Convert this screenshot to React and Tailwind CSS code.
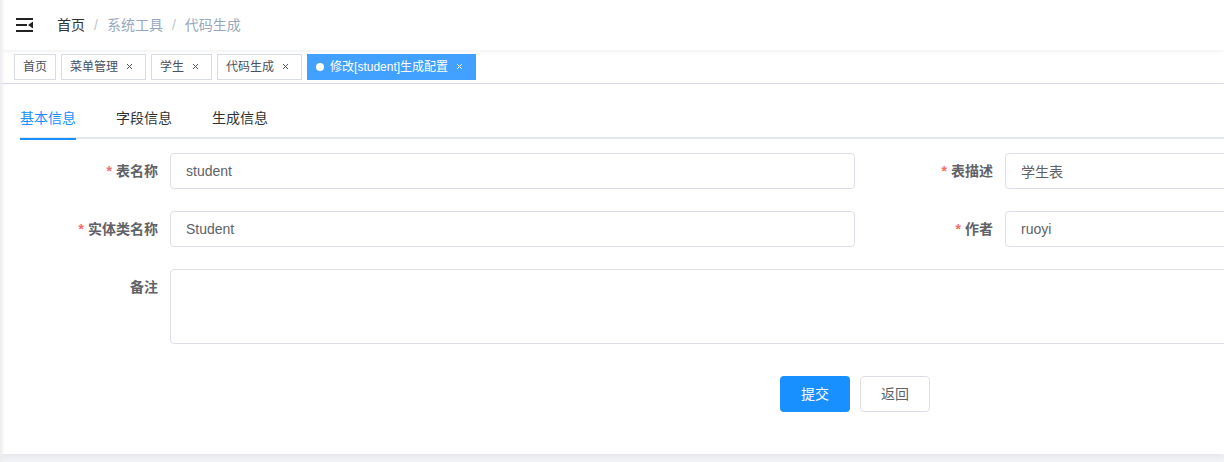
import React, { useState } from 'react';

const FONT = { fontFamily: '"Liberation Sans", "Noto Sans CJK SC", sans-serif' };

const TAGS = [
  { title: '首页', closable: false },
  { title: '菜单管理', closable: true },
  { title: '学生', closable: true },
  { title: '代码生成', closable: true },
  { title: '修改[student]生成配置', closable: true, active: true },
];

function Hamburger() {
  return (
    <svg width="18" height="16" viewBox="0 0 18 16" className="block">
      <rect x="0" y="1" width="17" height="2" fill="#222" />
      <rect x="0" y="7" width="11" height="2" fill="#222" />
      <rect x="0" y="13" width="17" height="2" fill="#222" />
      <polygon points="12,8 17,4.5 17,11.5" fill="#222" />
    </svg>
  );
}

function CloseX({ light }) {
  return (
    <span className="ml-[3px] w-4 h-4 flex items-center justify-center">
      <svg width="7" height="7" viewBox="0 0 7 7">
        <path d="M1 1L6 6M6 1L1 6" stroke={light ? '#fff' : '#555'} strokeWidth="1" />
      </svg>
    </span>
  );
}

function Label({ text, required }) {
  return (
    <label className="w-[150px] shrink-0 pr-3 text-right text-sm font-bold text-[#606266] leading-9">
      {required && <span className="text-[#f56c6c] mr-1">*</span>}
      {text}
    </label>
  );
}

function Field({ label, value, required }) {
  return (
    <div className="flex mb-[22px]">
      <Label text={label} required={required} />
      <input
        defaultValue={value}
        className="flex-1 h-9 px-[15px] border border-[#dcdfe6] rounded text-sm text-[#606266] outline-none bg-white"
        style={FONT}
      />
    </div>
  );
}

export default function App() {
  const [tab, setTab] = useState(0);
  const tabs = ['基本信息', '字段信息', '生成信息'];

  return (
    <div className="relative w-[1224px] h-[462px] overflow-hidden bg-[#f0f2f5]" style={FONT}>
      {/* sidebar shadow */}
      <div className="absolute left-0 top-0 bottom-0 w-[5px] z-10 bg-gradient-to-r from-[#ececec] to-transparent" />

      {/* Navbar */}
      <div className="h-[50px] bg-white flex items-center shadow-[0_1px_4px_rgba(0,21,41,0.08)] relative z-[1]">
        <div className="pl-4 pr-[23px]">
          <Hamburger />
        </div>
        <div className="flex items-center text-sm">
          <span className="text-[#303133]">首页</span>
          <span className="mx-[9px] text-[#c0c4cc]">/</span>
          <span className="text-[#97a8be]">系统工具</span>
          <span className="mx-[9px] text-[#c0c4cc]">/</span>
          <span className="text-[#97a8be]">代码生成</span>
        </div>
      </div>

      {/* Tags view */}
      <div className="h-[34px] bg-white border-b border-[#d8dce5] shadow-[0_1px_3px_0_rgba(0,0,0,0.12),0_0_3px_0_rgba(0,0,0,0.04)] flex items-center">
        {TAGS.map((t, i) => (
          <div
            key={t.title}
            className={`h-[26px] flex items-center px-2 text-xs border ${i === 0 ? 'ml-[14px]' : 'ml-[5px]'} ${
              t.active ? 'bg-[#42a0ff] border-[#42a0ff] text-white' : 'bg-white border-[#d8dce5] text-[#495060]'
            }`}
          >
            {t.active && <span className="w-2 h-2 rounded-full bg-white mr-[6px]" />}
            {t.title}
            {t.closable && <CloseX light={t.active} />}
          </div>
        ))}
      </div>

      {/* Card */}
      <div className="bg-white px-5 pt-[15px] pb-[20px] shadow-[0_2px_6px_rgba(0,0,0,0.06)]">
        <div className="w-[1670px]">
          <div className="flex border-b-2 border-[#e4e7ed] h-10 items-center">
            {tabs.map((t, i) => (
              <button
                key={t}
                onClick={() => setTab(i)}
                className={`h-10 text-sm relative ${i === 0 ? 'pr-5' : 'px-5'} ${
                  tab === i ? 'text-[#1890ff]' : 'text-[#303133]'
                }`}
              >
                {t}
                {tab === i && (
                  <span
                    className={`absolute bottom-[-2px] h-[2px] bg-[#1890ff] ${i === 0 ? 'left-0 right-5' : 'left-5 right-5'}`}
                  />
                )}
              </button>
            ))}
          </div>

          <div className="mt-[14px]">
            <div className="grid grid-cols-2">
              <Field label="表名称" value="student" required />
              <Field label="表描述" value="学生表" required />
              <Field label="实体类名称" value="Student" required />
              <Field label="作者" value="ruoyi" required />
            </div>
            <div className="flex mb-[32px]">
              <Label text="备注" />
              <textarea
                className="flex-1 h-[75px] px-[15px] py-[5px] border border-[#dcdfe6] rounded text-sm text-[#606266] outline-none resize-none"
                style={FONT}
              />
            </div>
            <div className="flex justify-center gap-[10px] mb-[22px]">
              <button className="w-[70px] h-9 rounded bg-[#1890ff] text-white text-sm">提交</button>
              <button className="w-[70px] h-9 rounded bg-white border border-[#dcdfe6] text-[#606266] text-sm">返回</button>
            </div>
          </div>
        </div>
      </div>
    </div>
  );
}
